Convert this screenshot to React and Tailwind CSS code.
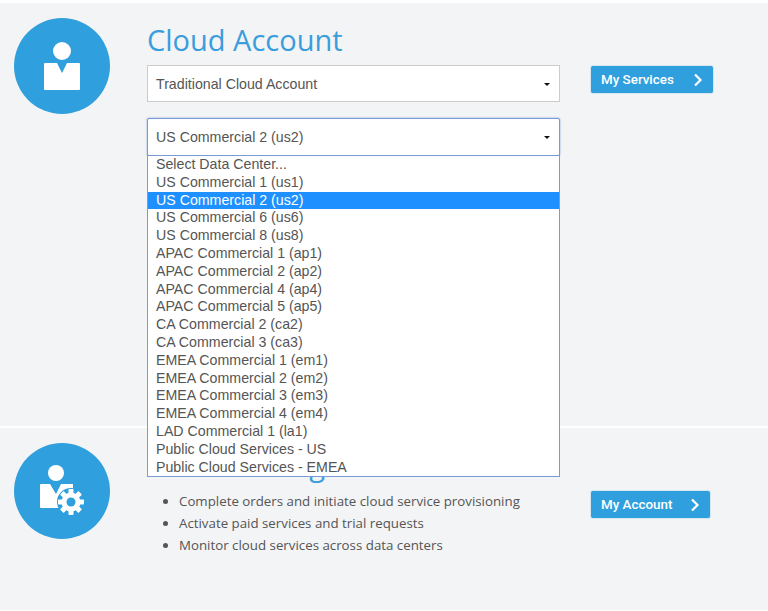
const datacenters = [
  'Select Data Center...',
  'US Commercial 1 (us1)',
  'US Commercial 2 (us2)',
  'US Commercial 6 (us6)',
  'US Commercial 8 (us8)',
  'APAC Commercial 1 (ap1)',
  'APAC Commercial 2 (ap2)',
  'APAC Commercial 4 (ap4)',
  'APAC Commercial 5 (ap5)',
  'CA Commercial 2 (ca2)',
  'CA Commercial 3 (ca3)',
  'EMEA Commercial 1 (em1)',
  'EMEA Commercial 2 (em2)',
  'EMEA Commercial 3 (em3)',
  'EMEA Commercial 4 (em4)',
  'LAD Commercial 1 (la1)',
  'Public Cloud Services - US',
  'Public Cloud Services - EMEA',
]

const bullets = [
  'Complete orders and initiate cloud service provisioning',
  'Activate paid services and trial requests',
  'Monitor cloud services across data centers',
]

function Caret() {
  return (
    <svg width="6" height="3" viewBox="0 0 6 3" className="absolute right-[9px] top-1/2 -mt-px">
      <path d="M0 0h6L3 3z" fill="#111" />
    </svg>
  )
}

function PersonIcon() {
  return (
    <svg width="96" height="96" viewBox="0 0 96 96" className="block shrink-0">
      <circle cx="48" cy="48" r="48" fill="#2f9fdd" />
      <circle cx="48" cy="33" r="9" fill="#fff" />
      <path d="M31 45h12l5 10 5-10h12a1 1 0 0 1 1 1v25a1 1 0 0 1-1 1H31a1 1 0 0 1-1-1V46a1 1 0 0 1 1-1z" fill="#fff" />
    </svg>
  )
}

function PersonGearIcon() {
  const teeth = [0, 45, 90, 135, 180, 225, 270, 315]
  return (
    <svg width="96" height="96" viewBox="0 0 96 96" className="block shrink-0">
      <circle cx="48" cy="48" r="48" fill="#2f9fdd" />
      <circle cx="42" cy="30" r="8" fill="#fff" />
      <path d="M27 41h9l6 10 5-10h12v24H27a1 1 0 0 1-1-1V42a1 1 0 0 1 1-1z" fill="#fff" />
      <circle cx="57" cy="59" r="14" fill="#2f9fdd" />
      <g fill="#fff">
        {teeth.map((a) => (
          <rect key={a} x="54.5" y="46" width="5" height="5" rx="0.8" transform={`rotate(${a} 57 59)`} />
        ))}
        <circle cx="57" cy="59" r="9.5" />
      </g>
      <circle cx="57" cy="59" r="4.5" fill="#2f9fdd" />
    </svg>
  )
}

function ActionButton({ label, width }) {
  return (
    <button className={`flex h-[29px] ${width} items-center justify-between rounded-[3px] border border-[#d5e6f2] bg-[#2f9fdd] pl-[10px] pr-[10px] pt-px font-['Roboto',sans-serif] text-[13.4px] font-medium text-white`}>
      {label}
      <svg width="10" height="14" viewBox="0 0 10 14" fill="none" stroke="#fff" strokeWidth="2.2">
        <path d="M2 1.5L7.5 7 2 12.5" />
      </svg>
    </button>
  )
}

export default function App() {
  return (
    <div className="relative h-[611px] w-[768px] overflow-hidden bg-white pt-[3px] font-['Open_Sans',sans-serif]">
      {/* top panel */}
      <section className="flex h-[423px] bg-[#f3f4f6] pl-[14px] pt-[15px]">
        <PersonIcon />
        <div className="ml-[37px] w-[413px]">
          <h1 className="text-[29px] font-normal leading-[44px] text-[#3a9ddc]">Cloud Account</h1>
          <div className="relative mt-[3px] flex h-[37px] items-center border border-[#cccccc] bg-white pl-2 pt-[2px] font-['Liberation_Sans',sans-serif] text-[14.2px] text-[#555]">
            Traditional Cloud Account
            <Caret />
          </div>
          <div className="relative mt-4 h-[38px]">
            <div className="relative flex h-[38px] items-center rounded-[2px] border border-[#7b9bd6] bg-white pl-2 pt-[2px] font-['Liberation_Sans',sans-serif] text-[14.2px] text-[#555] shadow-[0_0_2px_#7b9bd6]">
              US Commercial 2 (us2)
              <Caret />
            </div>
            {/* open dropdown list */}
            <ul className="absolute left-0 top-[37px] z-10 w-[413px] border border-[#7b9bd6] bg-white font-['Liberation_Sans',sans-serif] text-[14.2px] text-[#555]">
              {datacenters.map((name) => (
                <li key={name} className={name === 'US Commercial 2 (us2)' ? 'h-[17.8px] bg-[#1e90ff] pl-2 leading-[17.8px] text-white' : 'h-[17.8px] pl-2 leading-[17.8px]'}>
                  {name}
                </li>
              ))}
            </ul>
          </div>
        </div>
        <div className="ml-[30px] pt-[47px]">
          <ActionButton label="My Services" width="w-[124px]" />
        </div>
      </section>

      {/* bottom panel */}
      <section className="mt-[2px] flex h-[182px] bg-[#f3f4f6] pl-[14px] pt-[15px]">
        <PersonGearIcon />
        <div className="ml-[37px] w-[413px]">
          <h2 className="text-[29px] font-normal leading-[44px] text-[#3a9ddc]">Cloud Management</h2>
          <ul className="mt-[3px] pl-[32px] text-[13.3px] leading-[22px] text-[#555]">
            {bullets.map((b) => (
              <li key={b} className="list-disc">{b}</li>
            ))}
          </ul>
        </div>
        <div className="ml-[30px] pt-[47px]">
          <ActionButton label="My Account" width="w-[121px]" />
        </div>
      </section>
    </div>
  )
}
